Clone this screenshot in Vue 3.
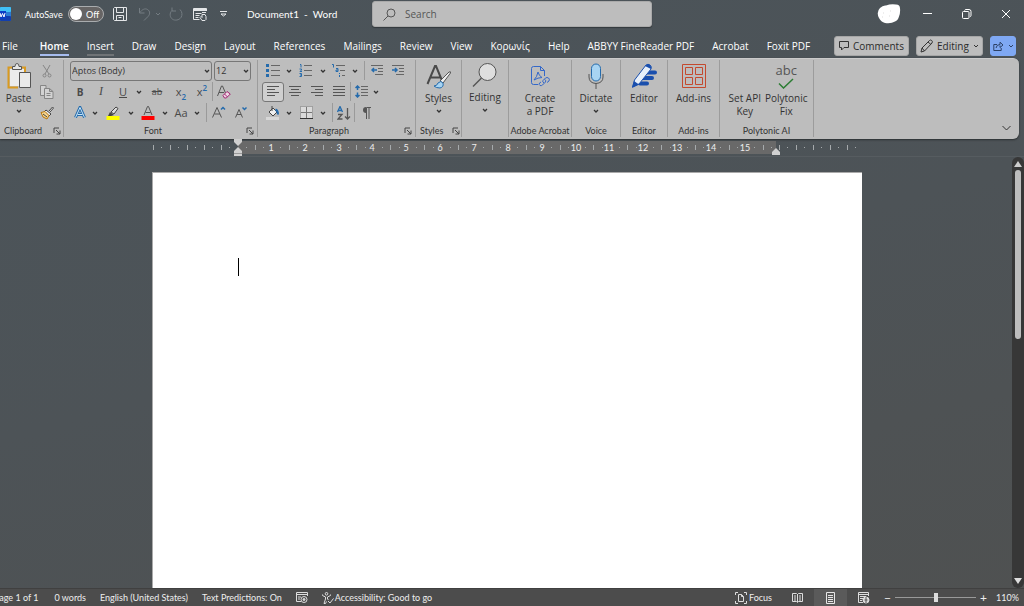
<script setup>
import { ref } from 'vue'

const tabs = ['File', 'Home', 'Insert', 'Draw', 'Design', 'Layout', 'References', 'Mailings', 'Review', 'View', 'Κορωνίς', 'Help', 'ABBYY FineReader PDF', 'Acrobat', 'Foxit PDF']
const activeTab = ref('Home')
const autoSave = ref(false)
const zoom = ref(50)

const cm = 33.85
const numbers = Array.from({ length: 15 }, (_, i) => i + 1)
const origin = 85
const bars = [0, 1, 2, 3, 4].map((i) => i * 17)
  .concat(Array.from({ length: 16 }, (_, i) => Math.round(origin + (i + 0.5) * cm)))
  .concat([0, 1, 2, 3, 4].map((i) => 626 + i * 17))
const dots = [0, 1, 2, 3, 4].map((i) => 8 + i * 17)
  .concat(Array.from({ length: 32 }, (_, i) => Math.round(origin + (i + 0.5) * cm / 2)).filter((x) => x < 622))
  .concat([0, 1, 2, 3, 4].map((i) => 634 + i * 17))
</script>

<template>
  <div class="word">
    <header class="titlebar">
      <div class="quick">
        <svg class="logo" width="11" height="14" viewBox="0 0 11 14"><rect width="11" height="14" rx="1" fill="#2b7cd3" /><rect width="11" height="5" rx="1" fill="#41c0f5" /><rect y="9" width="11" height="5" rx="1" fill="#123fae" /><rect y="4" width="6" height="8" fill="#0b3fc4" /><path d="M0 6l1 4 1.500-3.500L4 10l1-4" fill="none" stroke="#fff" /></svg>
        <label class="autosave"><span>AutoSave</span><input v-model="autoSave" type="checkbox" role="switch"><span class="toggle"><i></i>{{ autoSave ? 'On' : 'Off' }}</span></label>
        <button class="qb save" aria-label="Save"><svg width="14" height="14" viewBox="0 0 14 14" fill="none" stroke="#e4e6e8"><path d="M.5 1.500v11l1 1h12V.5H1.500zM3.500.5v5h7v-5M3.500 13.500v-5h7v5M5.500 10.500h3" /></svg></button>
        <button class="qb undo" aria-label="Undo"><svg width="14" height="14" viewBox="0 0 14 14" fill="none" stroke="#747c82"><path d="M1.500 1v5h5M2 5.500C4 2.500 7 1 9.500 2.500c3 1.800 2.500 5 .5 7L6 13.500" /></svg></button>
        <button class="qb more" aria-label="Undo history"><svg width="6" height="4" viewBox="0 0 6 4" fill="none" stroke="#747c82"><path d="M1 1l2 2 2-2" /></svg></button>
        <button class="qb redo" aria-label="Repeat"><svg width="14" height="14" viewBox="0 0 14 14" fill="none" stroke="#747c82"><path d="M3 .5v3.500h4M3 3.500C0 6.500 1 10.500 3.500 12.200s6.500 1 8.500-1.700c1.600-2.600 1.200-5.800-1-8" /></svg></button>
        <button class="qb form" aria-label="Form view"><svg width="14" height="14" viewBox="0 0 14 14" fill="none" stroke="#e4e6e8"><path d="M13.500 4V1.500H.5v11h6M.5 3.500h13M2.500 6.500h6M2.500 8.500h4M2.500 10.500h3M9 7.500h3l1 2v3l-1 1H9l-2-3 1-1 1 1zM9 5.500h4" /><path d="M1 2.500h12" /></svg></button>
        <button class="qb custom" aria-label="Customize toolbar"><svg width="7" height="6" viewBox="0 0 7 6" fill="none" stroke="#e4e6e8"><path d="M0 .5h7M1 3l2.500 2L6 3z" /></svg></button>
        <h1>Document1&nbsp; - &nbsp;Word</h1>
      </div>
      <label class="search"><svg width="13" height="13" viewBox="0 0 13 13" fill="none" stroke="#555"><circle cx="8" cy="5" r="4" /><path d="M5 8L.5 12.500" /></svg><input type="search" placeholder="Search" aria-label="Search"></label>
      <div class="window">
        <button class="avatar" aria-label="Account"><svg width="24" height="20" viewBox="0 0 24 20"><path d="M3 4Q6 1 9 1.500 14-.5 19 .5q4 0 4 4 .5 4-1 8-1 4-4 5-4 2.500-10 1.500-4-1-6-5Q-1 8 3 4z" fill="#fff" /><path d="M6 9h1M12 12h1M5 13h1M13 7h1" stroke="#ddd" /></svg></button>
        <button aria-label="Minimize"><svg width="10" height="10" viewBox="0 0 10 10" stroke="#fff"><path d="M0 4.500h9" /></svg></button>
        <button aria-label="Restore"><svg width="10" height="10" viewBox="0 0 10 10" fill="none" stroke="#fff"><rect x=".5" y="2.500" width="6.500" height="7" rx="1" /><path d="M2.500 1.500Q3 .5 4 .5h3q2 0 2 2v4q0 1-1 1" /></svg></button>
        <button aria-label="Close"><svg width="10" height="10" viewBox="0 0 10 10" stroke="#fff"><path d="M1 1l8 8M9 1L1 9" /></svg></button>
      </div>
    </header>

    <nav class="tabs">
      <button v-for="t in tabs" :key="t" class="tab" :class="{ active: t === activeTab, hover: t === 'Insert' }" @click="activeTab = t">{{ t }}</button>
      <div class="tab-actions">
        <button class="act comments"><svg width="10" height="10" viewBox="0 0 10 10" fill="none" stroke="#333"><path d="M.5.5h9v6H5L2.500 9V6.500h-2z" /></svg>Comments</button>
        <button class="act editing"><svg width="13" height="14" viewBox="0 0 13 14" fill="none" stroke="#333"><path d="M1 13l1-4 7.500-7.500q1-1 2.200 0t.3 2.500L4.500 12zM8 3l3 2.500M2 9l2.500 3" /></svg>Editing<svg width="6" height="4" viewBox="0 0 6 4" fill="none" stroke="#333"><path d="M1 1l2 2 2-2" /></svg></button>
        <button class="act share" aria-label="Share"><svg width="11" height="10" viewBox="0 0 11 10" fill="none" stroke="#2c4166"><path d="M4 3.500H.8v6h7.400V7M3 7q.5-3.500 4-3.500V1.200L10 4 7 6.500v-2" /></svg><svg width="6" height="4" viewBox="0 0 6 4" fill="none" stroke="#2c4166"><path d="M1 1l2 2 2-2" /></svg></button>
      </div>
    </nav>

    <section class="ribbon" aria-label="Home ribbon">
      <div class="group clipboard">
        <div class="clip-body">
          <button class="big"><svg width="24" height="28" viewBox="0 0 24 28"><path d="M5 5.500H1.500v20H11" fill="none" stroke="#d99a20" stroke-width="2" /><path d="M14 5.500h4V10" fill="none" stroke="#d99a20" stroke-width="2" /><path d="M3 7h14v3h-5v14H3z" fill="#ececec" /><path d="M5.500 7.500v-3h2.500q0-3 2-3t2 3h2.500v3z" fill="#e6e6e6" stroke="#555" /><path d="M12.500 10.500h11v15h-11z" fill="#e9e9e9" stroke="#555" /></svg><span>Paste</span><svg class="cv" viewBox="0 0 6 4"><path d="M1 1l2 2 2-2" /></svg></button>
          <div class="clip-col">
            <button aria-label="Cut"><svg width="10" height="14" viewBox="0 0 10 14" fill="none" stroke="#858585"><path d="M1 1l6 9M8 1L3 10" /><circle cx="2.500" cy="11.500" r="1.500" /><circle cx="7.500" cy="11.500" r="1.500" /></svg></button>
            <button aria-label="Copy"><svg width="14" height="14" viewBox="0 0 14 14" fill="#d2d2d2" stroke="#858585"><path d="M4 10.500H.5V.5H6v3M4.500 3.500h5l3.500 3v7H4.500zM9.500 3.500v3H13M6.500 8.500h4M6.500 10.500h4" /></svg></button>
            <button aria-label="Format painter"><svg width="14" height="14" viewBox="0 0 14 14"><path d="M9 5l3.500-4 1 1-3.500 4" fill="#eee" stroke="#444" /><path d="M6 4l5 4-2 2-5-4z" fill="#eee" stroke="#444" /><path d="M1 6.500l4-1 4 4-2 3.500-2-1-2-1z" fill="#f6d48d" stroke="#b8770e" /><path d="M3 8l4 3" stroke="#444" /></svg></button>
          </div>
        </div>
        <footer><span>Clipboard</span><button class="launch" aria-label="Clipboard options"><svg viewBox="0 0 8 8"><path d="M1 6V1h5M3 3l4 4M7 3.500V7H3.500" /></svg></button></footer>
      </div>

      <div class="group font">
        <div class="row selects">
          <label class="pick face"><select aria-label="Font"><option>Aptos (Body)</option></select><svg class="cv" viewBox="0 0 6 4"><path d="M1 1l2 2 2-2" /></svg></label>
          <label class="pick size"><select aria-label="Font size"><option>12</option></select><svg class="cv" viewBox="0 0 6 4"><path d="M1 1l2 2 2-2" /></svg></label>
        </div>
        <div class="row">
          <button class="w20"><b>B</b></button><button class="w22"><em>I</em></button><button class="w22"><u>U</u></button>
          <button class="drop" aria-label="Underline style"><svg class="cv" viewBox="0 0 6 4"><path d="M1 1l2 2 2-2" /></svg></button>
          <button class="w26"><s>ab</s></button><button class="w22">x<sub>2</sub></button><button class="w20">x<sup>2</sup></button><i class="sep"></i>
          <button class="w22" aria-label="Clear formatting"><svg width="14" height="14" viewBox="0 0 14 14" fill="none" stroke="#555"><path d="M.5 11L4.500 1h1l3 7M2 7.500h5" /><path d="M6 10.500l4-4 3.300 2.500-4 4H7.500z" fill="#eed6e4" stroke="#a12572" /><path d="M7.500 9l3 3" stroke="#a12572" /></svg></button>
        </div>
        <div class="row">
          <button class="w20" aria-label="Text effects"><svg width="12" height="13" viewBox="0 0 12 13" fill="none"><path d="M1.500 11.500L6 1.500l4.500 10M3.500 8.500h5" stroke="#256bac" stroke-width="3" /><path d="M1.500 11.500L6 1.500l4.500 10M3.500 8.500h5" stroke="#c9e6f8" /></svg></button>
          <button class="drop" aria-label="Text effect choices"><svg class="cv" viewBox="0 0 6 4"><path d="M1 1l2 2 2-2" /></svg></button>
          <button class="w26" aria-label="Highlight"><svg width="14" height="14" viewBox="0 0 14 14"><path d="M5 6l5-5 2 1.500L8 8z" fill="#ddd" stroke="#444" /><path d="M4 6l4 3-3 1H2z" fill="#444" /><path d="M.5 10h13v4H.5z" fill="#ff0" /></svg></button>
          <button class="drop" aria-label="Highlight color"><svg class="cv" viewBox="0 0 6 4"><path d="M1 1l2 2 2-2" /></svg></button>
          <button class="w24" aria-label="Font color"><svg width="14" height="14" viewBox="0 0 14 14"><path d="M3 9l3.500-8.500h1L11 9M4.500 6.500h5" fill="none" stroke="#555" /><path d="M.5 10h13v4H.5z" fill="#f00" /></svg></button>
          <button class="drop" aria-label="Font colors"><svg class="cv" viewBox="0 0 6 4"><path d="M1 1l2 2 2-2" /></svg></button>
          <button class="w22 case">Aa</button>
          <button class="drop" aria-label="Case choices"><svg class="cv" viewBox="0 0 6 4"><path d="M1 1l2 2 2-2" /></svg></button><i class="sep gap"></i>
          <button class="w22" aria-label="Grow font"><svg width="14" height="14" viewBox="0 0 14 14" fill="none" stroke="#555"><path d="M.5 11.500L5 1.500l4.500 10M2.500 8h5.500" /><path d="M9 3.500l2-2 2 2" stroke="#256bac" stroke-width="1.500" /></svg></button>
          <button class="w22" aria-label="Shrink font"><svg width="14" height="14" viewBox="0 0 14 14" fill="none" stroke="#555"><path d="M1.500 11.500L5 3.500l3.500 8M3 8.500h4" /><path d="M8.500 1.500l2 2 2-2" stroke="#256bac" stroke-width="1.500" /></svg></button>
        </div>
        <footer><span>Font</span><button class="launch" aria-label="Font options"><svg viewBox="0 0 8 8"><path d="M1 6V1h5M3 3l4 4M7 3.500V7H3.500" /></svg></button></footer>
      </div>

      <div class="group para">
        <div class="row">
          <button class="w22" aria-label="Bullets"><svg width="14" height="13" viewBox="0 0 14 13"><path d="M5 1.500h9M5 6.500h9M5 11.500h9" stroke="#666" /><path d="M0 0h3v3H0zM0 5h3v3H0zM0 10h3v3H0z" fill="#256bac" /></svg></button>
          <button class="drop" aria-label="Bullet styles"><svg class="cv" viewBox="0 0 6 4"><path d="M1 1l2 2 2-2" /></svg></button>
          <button class="w24" aria-label="Numbering"><svg width="14" height="13" viewBox="0 0 14 13" fill="none"><path d="M5 1.500h8M5 6.500h8M5 11.500h8" stroke="#666" /><path d="M1 .5h1v3M.5 5h2v1L1 7.500h2M.5 9.500h2v3h-2M1 11h1.500" stroke="#256bac" /></svg></button>
          <button class="drop" aria-label="Number formats"><svg class="cv" viewBox="0 0 6 4"><path d="M1 1l2 2 2-2" /></svg></button>
          <button class="w22" aria-label="Multilevel list"><svg width="14" height="13" viewBox="0 0 14 13" fill="none"><path d="M4 1.500h9M8 6.500h5M10 11.500h3" stroke="#666" /><path d="M0 .5h1.500v3M4 4.500h2v3H4V6h2M7.500 9v1M7.500 11v2" stroke="#256bac" /></svg></button>
          <button class="drop" aria-label="List levels"><svg class="cv" viewBox="0 0 6 4"><path d="M1 1l2 2 2-2" /></svg></button><i class="sep gap"></i>
          <button class="w22" aria-label="Decrease indent"><svg width="12" height="11" viewBox="0 0 12 11" fill="none"><path d="M0 .5h12M7 3.500h5M7 6.500h5M4 9.500h8" stroke="#666" /><path d="M6 5H1M3 3L1 5l2 2" stroke="#256bac" stroke-width="1.500" /></svg></button>
          <button class="w20" aria-label="Increase indent"><svg width="12" height="11" viewBox="0 0 12 11" fill="none"><path d="M0 .5h12M7 3.500h5M7 6.500h5M4 9.500h8" stroke="#666" /><path d="M0 5h5M3 3l2 2-2 2" stroke="#256bac" stroke-width="1.500" /></svg></button>
        </div>
        <div class="row">
          <button class="w22 on" aria-label="Align left"><svg width="12" height="11" viewBox="0 0 12 11" stroke="#555"><path d="M0 .5h12M0 3.500h8M0 6.500h12M0 9.500h8" /></svg></button>
          <button class="w22" aria-label="Center"><svg width="12" height="11" viewBox="0 0 12 11" stroke="#555"><path d="M0 .5h12M2 3.500h8M0 6.500h12M2 9.500h8" /></svg></button>
          <button class="w22" aria-label="Align right"><svg width="12" height="11" viewBox="0 0 12 11" stroke="#555"><path d="M0 .5h12M4 3.500h8M0 6.500h12M4 9.500h8" /></svg></button>
          <button class="w22" aria-label="Justify"><svg width="12" height="11" viewBox="0 0 12 11" stroke="#555"><path d="M0 .5h12M0 3.500h12M0 6.500h12M0 9.500h12" /></svg></button><i class="sep"></i>
          <button class="w20" aria-label="Line spacing"><svg width="13" height="13" viewBox="0 0 13 13" fill="none"><path d="M6 1.500h7M6 4.500h7M6 7.500h7M6 10.500h7" stroke="#666" /><path d="M2.500 1v4M.5 3l2-2 2 2M2.500 7.500v5M.5 10l2 2 2-2" stroke="#256bac" stroke-width="1.500" /></svg></button>
          <button class="drop" aria-label="Spacing choices"><svg class="cv" viewBox="0 0 6 4"><path d="M1 1l2 2 2-2" /></svg></button>
        </div>
        <div class="row">
          <button class="w22" aria-label="Shading"><svg width="14" height="14" viewBox="0 0 14 14"><path d="M3 6l4-4 4 4-4 4z" fill="#eee" stroke="#444" /><path d="M6 0v5" stroke="#444" /><path d="M9.500 3.500q2.500 1 2.500 5" fill="none" stroke="#256bac" stroke-width="2" /><path d="M0 11h13v3H0z" fill="#d8d8d8" /></svg></button>
          <button class="drop" aria-label="Shading color"><svg class="cv" viewBox="0 0 6 4"><path d="M1 1l2 2 2-2" /></svg></button>
          <button class="w24" aria-label="Borders"><svg width="13" height="13" viewBox="0 0 13 13" fill="#dadada"><path d="M.5.5h12v12H.5z" stroke="#777" stroke-dasharray="1 1" /><path d="M6.500 1v11M1 6.500h11" stroke="#777" /><path d="M0 12.500h13" stroke="#333" /></svg></button>
          <button class="drop" aria-label="Border styles"><svg class="cv" viewBox="0 0 6 4"><path d="M1 1l2 2 2-2" /></svg></button><i class="sep gap"></i>
          <button class="w20" aria-label="Sort"><svg width="14" height="14" viewBox="0 0 14 14" fill="none"><path d="M.5 6L3 .5 5.500 6M1.500 4.500h3" stroke="#256bac" stroke-width="1.300" /><path d="M1 8.500h4L1 13h4.500M10.500 2v11M8 10.500l2.500 2.500 2.500-2.500" stroke="#555" stroke-width="1.300" /></svg></button><i class="sep"></i>
          <button class="w22" aria-label="Show marks"><svg width="9" height="12" viewBox="0 0 9 12"><path d="M4.500 .5H9M4.500.5V12M7 .5V12" stroke="#555" fill="none" /><path d="M4 0a3 3 0 000 6z" fill="#555" /></svg></button>
        </div>
        <footer><span>Paragraph</span><button class="launch" aria-label="Paragraph options"><svg viewBox="0 0 8 8"><path d="M1 6V1h5M3 3l4 4M7 3.500V7H3.500" /></svg></button></footer>
      </div>

      <div class="group styles">
        <button class="big"><svg width="26" height="26" viewBox="0 0 26 26"><path d="M1.500 21L9 3h1l7 17M4 14.500h10" fill="none" stroke="#4a4a4a" stroke-width="2" /><path d="M14 18L23 9q2-1 1.500 1L17 20z" fill="#eee" stroke="#555" /><path d="M8 23q3 0 4-3 3-3 5 0 1 4-3 5-4 0-6-2z" fill="#a8d4f2" stroke="#256bac" /></svg><span>Styles</span><svg class="cv" viewBox="0 0 6 4"><path d="M1 1l2 2 2-2" /></svg></button>
        <footer><span>Styles</span><button class="launch" aria-label="Style options"><svg viewBox="0 0 8 8"><path d="M1 6V1h5M3 3l4 4M7 3.500V7H3.500" /></svg></button></footer>
      </div>
      <div class="group edit">
        <button class="big"><svg width="26" height="26" viewBox="0 0 26 26"><circle cx="15.500" cy="10" r="8.500" fill="#dedede" stroke="#555" /><path d="M9.500 16L1 24.500" stroke="#555" stroke-width="1.500" /></svg><span>Editing</span><svg class="cv" viewBox="0 0 6 4"><path d="M1 1l2 2 2-2" /></svg></button>
        <footer></footer>
      </div>
      <div class="group adobe">
        <button class="big"><svg width="20" height="22" viewBox="0 0 20 22" fill="none" stroke="#3468c9"><path d="M8 19.500H3.500q-2 0-2-2v-14q0-2 2-2h7l4 4V11M10.500 1.500v4h4" /><path d="M4 15q3-3 4-8 1 4 4 5.500-4 0-8 2.500" /><path d="M11 17l-1.500 1q-1 2 .5 2.500t2.500-.5l3-3q1-2-1-2.500M14 18q-2-1-1-2.500l2.500-2.500q1.500-1 3 0t.5 3L17 17.500" /></svg><span>Create<br>a PDF</span></button>
        <footer><span>Adobe Acrobat</span></footer>
      </div>
      <div class="group voice">
        <button class="big"><svg width="16" height="26" viewBox="0 0 16 26"><rect x="3.500" y="1" width="9" height="17" rx="4.500" fill="#a8d4f2" stroke="#256bac" /><path d="M1 11v3q0 6 7 6.500 7-.5 7-6.500v-3M8 20.500V26" fill="none" stroke="#555" /></svg><span>Dictate</span><svg class="cv" viewBox="0 0 6 4"><path d="M1 1l2 2 2-2" /></svg></button>
        <footer><span>Voice</span></footer>
      </div>
      <div class="group editor">
        <button class="big"><svg width="26" height="26" viewBox="0 0 26 26"><path d="M14 9.500h10M12 15h9M9 20.500h7" stroke="#1a4fad" stroke-width="4" stroke-linecap="round" /><path d="M1.500 24l2-7L15 2q2-1.500 4 0t1 4L8 21z" fill="#e8f0fa" stroke="#1a4fad" /><path d="M1 25l2-7 5 3.500zM14 3q3-3 5-1t1 4z" fill="#1a4fad" /></svg><span>Editor</span></button>
        <footer><span>Editor</span></footer>
      </div>
      <div class="group addins">
        <button class="big"><svg width="24" height="24" viewBox="0 0 24 24" fill="none" stroke="#c4492e"><path d="M.5.5h23v23H.5zM3.500 3.500h7v7h-7zM13.500 3.500h7v7h-7zM3.500 13.500h7v7h-7zM13.500 13.500h7v7h-7z" /></svg><span>Add-ins</span></button>
        <footer><span>Add-ins</span></footer>
      </div>
      <div class="group poly">
        <div class="pair">
          <button class="big"><span class="blank"></span><span>Set API<br>Key</span></button>
          <button class="big"><span class="abc">abc<svg width="16" height="11" viewBox="0 0 16 11" fill="none" stroke="#2c7d34"><path d="M1 5.500L5.500 10 15 1" stroke-width="1.500" /></svg></span><span>Polytonic<br>Fix</span></button>
        </div>
        <footer><span>Polytonic AI</span></footer>
      </div>
      <button class="collapse" aria-label="Collapse ribbon"><svg width="9" height="6" viewBox="0 0 9 6" fill="none" stroke="#333"><path d="M.5 1l4 4 4-4" /></svg></button>
    </section>

    <div class="ruler">
      <svg width="710" height="18" viewBox="0 0 710 18">
        <rect x="85" y="2" width="538" height="13" fill="#696969" />
        <path v-for="x in bars" :key="'b' + x" :d="`M${x}.5 6v5`" stroke="#a6aaac" />
        <path v-for="x in dots" :key="'d' + x" :d="`M${x}.5 8v1`" stroke="#a6aaac" />
        <text v-for="n in numbers" :key="n" :x="Math.round(origin + n * cm) - 1" y="12" text-anchor="middle">{{ n }}</text>
        <path d="M81 0h8v3l-4 4-4-4zM85 8l4 4v5h-8v-5zM623 9l4 4v3h-8v-3z" fill="#d0d0d0" />
        <path d="M81 14.500h8" stroke="#999" />
      </svg>
    </div>

    <main class="canvas">
      <article class="page" aria-label="Document"><span class="caret"></span></article>
      <div class="scroll"><svg width="8" height="6" viewBox="0 0 8 6"><path d="M0 6l4-6 4 6z" fill="#ccc" /></svg><i class="thumb"></i><i class="rest"></i><svg width="8" height="6" viewBox="0 0 8 6"><path d="M0 0l4 6 4-6z" fill="#ddd" /></svg></div>
    </main>

    <footer class="status">
      <div class="left">
        <button class="pages">Page 1 of 1</button><button>0 words</button><button>English (United States)</button><button>Text Predictions: On</button>
        <button class="macro" aria-label="Record macro"><svg width="12" height="11" viewBox="0 0 12 11" fill="none" stroke="#ddd"><path d="M11.500 4V.5H.5v9H5M.5 2.500h11M2 5h3M2 7h2" /><circle cx="8" cy="7.500" r="3" /><circle cx="8" cy="7.500" r="1" fill="#ddd" /></svg></button>
        <button class="access"><svg width="12" height="12" viewBox="0 0 12 12" fill="none" stroke="#ddd"><circle cx="4.500" cy="1.800" r="1.300" /><path d="M.5 2.500v1l3 1.500v2L2 11.500h1.500l1-2M8.500 2.500v1L5.500 5v2l1 1M6 9l2 2 3.500-4.500" /></svg>Accessibility: Good to go</button>
      </div>
      <div class="right">
        <button class="focus"><svg width="12" height="12" viewBox="0 0 12 12" fill="none" stroke="#ddd"><path d="M3 .5H.5V3M9 .5h2.500V3M.5 9v2.500H3M11.500 9v2.500H9M3.500 2.500h3l2 2v5h-5zM6.500 2.500v2h2" /></svg>Focus</button>
        <button class="view" aria-label="Read mode"><svg width="11" height="10" viewBox="0 0 11 10" fill="none" stroke="#ddd"><path d="M.5.5h4l1 1 1-1h4v8h-4l-1 1-1-1h-4zM5.500 1v8M2 3h2M2 5h2M2 7h2M7 3h2M7 5h2M7 7h2" /></svg></button>
        <button class="view current" aria-label="Print layout"><svg width="9" height="12" viewBox="0 0 9 12" fill="none" stroke="#e6e6e6"><path d="M.5.5h8v11h-8zM2 3.500h5M2 5.500h5M2 7.500h5M2 9.500h5" /></svg></button>
        <button class="view" aria-label="Web layout"><svg width="12" height="12" viewBox="0 0 12 12" fill="none" stroke="#ddd"><path d="M10.500 4V.5H.5v10H5M.5 2.500h10M2 4.500h6M2 6.500h3M2 8.500h2" /><circle cx="8" cy="8" r="3" fill="#ddd" /><path d="M8 5v6M6.500 8h3" stroke="#555" /></svg></button>
        <button class="step">−</button>
        <input v-model="zoom" type="range" min="0" max="100" aria-label="Zoom">
        <button class="step">+</button>
        <button class="pct">110%</button>
      </div>
    </footer>
  </div>
</template>

<style>
body { background: #4d5357; overflow: hidden; }
</style>

<style scoped>
* { box-sizing: border-box; }
.word { height: 100vh; display: flex; flex-direction: column; overflow: hidden; font-family: Lato, "Open Sans", sans-serif; color: #fff; background: linear-gradient(165deg, #4b545a 0%, #4d5357 50%, #4f5151 100%); }
button { font: inherit; color: inherit; background: none; border: 0; padding: 0; display: flex; align-items: center; justify-content: center; white-space: nowrap; }
svg { flex: none; display: block; }

.titlebar { height: 28px; flex: none; display: grid; grid-template-columns: 1fr 280px 1fr; align-items: center; }
.quick { display: flex; align-items: center; font-size: 9px; }
.autosave { display: flex; align-items: center; gap: 6px; margin-left: 14px; }
.autosave > span:first-child { width: 37px; white-space: nowrap; }
.autosave input { position: absolute; opacity: 0; width: 1px; height: 1px; }
.toggle { width: 36px; height: 16px; border: 1px solid #a9acae; border-radius: 8px; background: #666464; display: flex; align-items: center; gap: 4px; padding-left: 1px; }
.toggle i { width: 12px; height: 12px; border-radius: 50%; background: #fff; }
.save { margin-left: 9px; }
.undo { margin-left: 11px; }
.more { margin-left: 3px; }
.redo { margin-left: 8px; }
.form { margin-left: 10px; }
.custom { margin-left: 13px; }
h1 { margin: 0 0 0 20px; font-size: 10px; font-weight: 400; white-space: nowrap; }
.search { height: 26px; background: #bdbdbd; border-radius: 3px; border: 1px solid #aaa; box-shadow: 0 1px 1px #34393c; display: flex; align-items: center; gap: 9px; padding-left: 10px; }
.search input { flex: 1; min-width: 0; border: 0; outline: 0; background: none; font: 10px "Open Sans", sans-serif; color: #444; padding: 0; appearance: none; }
.search input::placeholder { color: #555; opacity: 1; }
.window { display: flex; justify-content: flex-end; align-items: center; gap: 2px; }
.window button { width: 37px; height: 28px; }

.tabs { height: 30px; flex: none; display: flex; align-items: flex-end; gap: 18px; padding: 0 8px 2px 2px; font: 10px "Open Sans", sans-serif; }
.tab { height: 21px; padding-top: 2px; border-bottom: 2px solid transparent; }
.tab:first-child { margin-right: 4px; }
.tab.active { font-weight: 600; border-color: #a7bdf0; }
.tab.hover { border-color: #6f7376; }
.tab-actions { margin-left: auto; display: flex; gap: 7px; color: #2b2b2b; }
.act { height: 20px; background: #bdbdbd; border: 1px solid #a6a6a6; border-radius: 3px; gap: 4px; }
.comments { width: 75px; }
.editing { width: 67px; }
.share { width: 26px; background: #7fa8f3; border-color: #7fa8f3; }

.ribbon { flex: none; display: flex; height: 81px; margin-right: 5px; padding: 1px 0 2px; border-radius: 0 6px 6px 0; background: #bdbdbd; color: #333; border-top: 1px solid #cbcbcb; box-shadow: 0 1px 2px #2b2f31; }
.group { flex: none; display: flex; flex-direction: column; border-right: 1px solid #9c9c9c; }
.clipboard { width: 64px; }
.font { width: 194px; padding-left: 6px; }
.para { width: 158px; padding-left: 4px; }
.styles { width: 46px; }
.edit { width: 47px; }
.adobe { width: 63px; }
.voice { width: 49px; }
.editor { width: 47px; }
.addins { width: 52px; }
.poly { width: 94px; }
.group > footer { margin-top: auto; height: 13px; display: flex; align-items: center; justify-content: center; font-size: 9px; line-height: 12px; white-space: nowrap; }
.launch { width: 8px; height: 8px; }
.launch svg { width: 8px; height: 8px; fill: none; stroke: #444; }
.clipboard footer { justify-content: space-between; padding: 0 2px 0 4px; }
.styles footer { justify-content: space-between; padding: 0 1px 0 4px; }
.font footer, .para footer { padding-right: 3px; }
.font footer span, .para footer span { flex: 1; text-align: center; }
.font footer span { padding-right: 10px; }
.para footer span { padding-right: 8px; }
.clip-body { display: flex; }
.clip-body .big { width: 37px; }
.clip-col { display: flex; flex-direction: column; }
.clip-col button { width: 20px; height: 21px; }
.cv { width: 6px; height: 4px; fill: none; stroke: #333; stroke-width: 1.3; }
.row { height: 21px; display: flex; align-items: center; font: 11px "Open Sans", sans-serif; color: #4a4a4a; }
.row button { height: 20px; }
.row .w20 { width: 20px; }
.row .w22 { width: 22px; }
.row .w24 { width: 24px; }
.row .w26 { width: 26px; }
.drop { width: 10px; }
.row .on { background: #cfcfcf; border: 1px solid #777; border-radius: 3px; }
.sep { width: 1px; height: 19px; background: #9a9a9a; }
.sep.gap { margin: 0 1px 0 4px; }
.row b { font-size: 10px; }
.row em { font-family: "Liberation Serif", serif; font-size: 12px; }
.row s { font-size: 9px; }
sub, sup { font-size: 8px; font-weight: 600; color: #256bac; line-height: 8px; }
sub { align-self: flex-end; padding-bottom: 1px; }
sup { align-self: flex-start; padding-top: 2px; }
.selects { gap: 2px; }
.pick { position: relative; height: 20px; }
.face { width: 142px; }
.size { width: 37px; }
.pick select { width: 100%; height: 100%; appearance: none; background: none; border: 1px solid #777; border-radius: 3px; padding: 0 1px; font: 9px "Open Sans", sans-serif; color: #333; }
.pick .cv { position: absolute; right: 2px; top: 8px; }
.big { flex-direction: column; justify-content: flex-start; font: 10px "Open Sans", sans-serif; line-height: 13px; width: 100%; padding-top: 2px; }
.big > svg:first-child { height: 28px; margin-bottom: 2px; }
.big .cv { margin-top: 4px; }
.edit .big { padding-top: 1px; }
.blank { height: 30px; }
.pair { display: flex; padding: 0 6px 0 4px; }
.pair .big { width: 50%; }
.abc { height: 30px; font-size: 13px; line-height: 16px; display: flex; flex-direction: column; align-items: center; color: #555; }
.collapse { margin: auto 8px 6px auto; }

.ruler { height: 18px; flex: none; padding-right: 8px; display: flex; justify-content: center; border-bottom: 1px solid #565c60; }
.ruler text { font: 9px Lato, sans-serif; fill: #eee; }
.canvas { flex: 1; min-height: 0; display: flex; padding-left: 152px; }
.page { flex: 1; margin: 15px 150px 0 0; background: #fff; border: solid #aaa; border-width: 1px 0 0 1px; padding: 85px; }
.caret { display: block; width: 1px; height: 18px; background: #000; }
.scroll { width: 12px; background: #373737; border-radius: 6px; display: flex; flex-direction: column; align-items: center; padding: 4px 0; }
.thumb { flex: 169; width: 6px; margin-top: 3px; border-radius: 3px; background: #bdbdbd; }
.rest { flex: 240; }

.status { flex: none; height: 18px; background: #4c4c4c; border-top: 1px solid #404040; display: flex; justify-content: space-between; font-size: 9px; color: #eee; }
.left, .right { display: flex; align-items: center; }
.left { gap: 14px; }
.pages { margin: 0 2px 0 -6px; }
.access { gap: 1px; }
.focus { gap: 2px; margin-right: 9px; }
.view { width: 33px; height: 17px; }
.current { background: #5a5a5a; }
.step { width: 15px; font-size: 12px; line-height: 14px; }
.pct { width: 33px; }
input[type=range] { appearance: none; width: 81px; height: 10px; margin: 0; background: linear-gradient(#999, #999) center / 100% 1px no-repeat; }
input[type=range]::-webkit-slider-thumb { appearance: none; width: 4px; height: 9px; background: #ddd; }
</style>
